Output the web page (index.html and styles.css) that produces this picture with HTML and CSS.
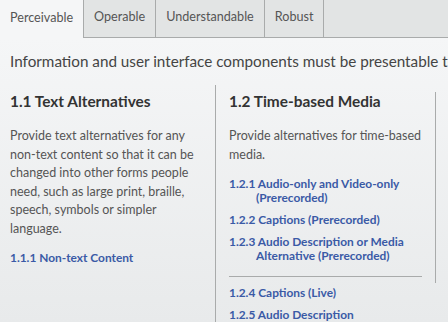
FILE: index.html
```html
<!DOCTYPE html>
<html lang="en">
<head>
<meta charset="utf-8">
<title>WCAG Principles</title>
<link rel="stylesheet" href="styles.css">
</head>
<body>
<div class="page">
  <nav class="tabs">
    <span class="tab active">Perceivable</span>
    <span class="tab">Operable</span>
    <span class="tab">Understandable</span>
    <span class="tab">Robust</span>
    <span class="tab-fill"></span>
  </nav>
  <main class="panel">
    <p class="intro">Information and user interface components must be presentable to users in ways they can perceive.</p>
    <div class="grid">
      <section class="col col-1">
        <h2>1.1 Text Alternatives</h2>
        <p class="desc">Provide text alternatives for any non-text content so that it can be changed into other forms people need, such as large print, braille, speech, symbols or simpler language.</p>
        <ul class="links">
          <li><a href="#">1.1.1 Non-text Content</a></li>
        </ul>
      </section>
      <section class="col col-2">
        <div class="bordered">
          <h2>1.2 Time-based Media</h2>
          <p class="desc">Provide alternatives for time-based media.</p>
          <ul class="links">
            <li><a href="#">1.2.1 Audio-only and Video-only (Prerecorded)</a></li>
            <li><a href="#">1.2.2 Captions (Prerecorded)</a></li>
            <li><a href="#">1.2.3 Audio Description or Media Alternative (Prerecorded)</a></li>
          </ul>
          <hr class="sep">
        </div>
        <ul class="links after">
          <li><a href="#">1.2.4 Captions (Live)</a></li>
          <li><a href="#">1.2.5 Audio Description (Prerecorded)</a></li>
        </ul>
      </section>
    </div>
  </main>
</div>
</body>
</html>
```

FILE: styles.css
```css
html, body {
  margin: 0;
  padding: 0;
  width: 448px;
  height: 322px;
  overflow: hidden;
}
body {
  font-family: "Lato", "Open Sans", sans-serif;
  color: #555;
  background: #e9ebec;
}
.page {
  display: flex;
  flex-direction: column;
  height: 322px;
}
.tabs {
  display: flex;
  height: 37px;
  background: #e2e4e4;
  border-bottom: 1px solid #a9abab;
  flex: none;
}
.tab {
  display: flex;
  align-items: center;
  padding: 0 10px 4px;
  font-size: 12.6px;
  color: #555;
  border-right: 1px solid #a9abab;
  background: #e2e4e4;
}
.tab.active {
  background: #f5f6f7;
  height: 34px;
  position: relative;
  z-index: 1;
}
.tab-fill {
  flex: 1;
}
.panel {
  flex: 1;
  background: linear-gradient(#f5f6f7, #e8eaeb);
  overflow: hidden;
}
.intro {
  margin: 13px 0 0 10px;
  font-size: 15.25px;
  line-height: 20px;
  color: #444;
  white-space: nowrap;
}
.grid {
  display: grid;
  grid-template-columns: 216px 220px;
  margin-top: 14px;
}
.col-1 {
  padding: 0 12px 0 10px;
  border-right: 1px solid #a9abab;
  min-height: 300px;
}
.col-2 {
  padding: 0 0 0 13px;
}
.col-2 .bordered {
  padding-right: 13px;
  border-right: 1px solid #a9abab;
  padding-bottom: 6px;
}
h2 {
  margin: 7px 0 0;
  font-size: 15.4px;
  line-height: 18px;
  font-weight: 700;
  color: #333;
}
.desc {
  margin: 17px 0 0;
  font-size: 12.5px;
  line-height: 18.5px;
  color: #555;
}
.links {
  list-style: none;
  margin: 13px 0 0;
  padding: 0;
}
.links li {
  padding-left: 27px;
  text-indent: -27px;
  margin-bottom: 8px;
  font-size: 11.9px;
  line-height: 14px;
}
.links a {
  color: #3a5aa6;
  font-weight: 700;
  text-decoration: none;
}
.sep {
  border: 0;
  border-top: 1px solid #a9abab;
  margin: 13px 0 0;
  width: 193px;
}
.links.after {
  margin-top: 3px;
  max-width: 170px;
}
```
